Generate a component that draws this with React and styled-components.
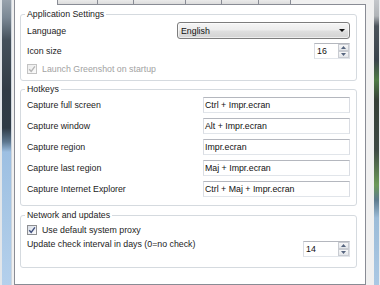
import React from "react";
import styled, { createGlobalStyle } from "styled-components";

const Global = createGlobalStyle`
  html, body { margin: 0; padding: 0; background: #f0f0f0; }
  body {
    width: 380px;
    height: 285px;
    overflow: hidden;
    font-family: "Liberation Sans", Arial, sans-serif;
    -webkit-font-smoothing: antialiased;
  }
  * { box-sizing: border-box; }
`;

const Screen = styled.div`
  display: flex;
  width: 380px;
  height: 285px;
  overflow: hidden;
`;

const LeftGlass = styled.div`
  flex: none;
  width: 12px;
  border-left: 2px solid #e2e6ea;
  border-right: 1px solid #cfd6dd;
  background: linear-gradient(
    180deg,
    #98a2ad 0px,
    #7a8794 18px,
    #45515c 40px,
    #313c46 90px,
    #2f3b47 128px,
    #5d7790 142px,
    #9dbfe2 152px,
    #a9c8e6 220px,
    #b4d0ec 285px
  );
`;

const RightGlass = styled.div`
  flex: none;
  width: 6px;
  border-right: 1px solid #e8ebee;
  background: linear-gradient(
    180deg,
    #c4c7cb 0px,
    #b0b4b8 16px,
    #4c545c 26px,
    #3a444c 60px,
    #4f7b46 80px,
    #364038 100px,
    #3e4a44 150px,
    #6c9a58 185px,
    #5d7b8e 200px,
    #9cbcd8 218px,
    #aac8e4 285px
  );
`;

const Window = styled.div`
  flex: 1;
  min-width: 0;
  display: flex;
  flex-direction: column;
  background: #f0f0f0;
  padding: 0 8px 0 2px;
`;

const TabStrip = styled.div`
  flex: none;
  display: flex;
  height: 5px;
`;

const Tab = styled.div`
  flex: none;
  width: ${(p) => p.$w}px;
  border-left: 1px solid #898c95;
  border-right: ${(p) => (p.$last ? "1px solid #898c95" : "none")};
  border-bottom: ${(p) => (p.$selected ? "none" : "1px solid #898c95")};
  background: ${(p) =>
    p.$selected ? "#ffffff" : "linear-gradient(180deg, #eaeaea, #dcdcdc)"};
`;

const TabFill = styled.div`
  flex: 1;
  border-bottom: 1px solid #898c95;
`;

const TabPage = styled.div`
  flex: 1;
  display: flex;
  flex-direction: column;
  background: #ffffff;
  border: 1px solid #898c95;
  border-top: none;
  padding: 4px 8px 0 5px;
`;

const Group = styled.fieldset`
  margin: ${(p) => p.$mt}px 0 0 0;
  padding: ${(p) => p.$pt}px 6px ${(p) => p.$pb}px 6px;
  border: 1px solid #d5dadf;
  border-radius: 3px;
  min-inline-size: 0;
  box-shadow: inset 1px 1px 0 #ffffff;
`;

const Legend = styled.legend`
  padding: 0 2px;
  margin-left: -2px;
  font-size: 8.8px;
  line-height: 10px;
  color: #1c1c1c;
`;

const Rows = styled.div`
  display: flex;
  flex-direction: column;
  gap: ${(p) => p.$gap}px;
`;

const Row = styled.div`
  display: flex;
  align-items: ${(p) => p.$align || "center"};
  height: ${(p) => p.$h}px;
`;

const Label = styled.span`
  font-size: 8.8px;
  line-height: 10px;
  white-space: nowrap;
  color: ${(p) => (p.$disabled ? "#a2a2a2" : "#1c1c1c")};
`;

const Combo = styled.div`
  margin-left: auto;
  width: 173px;
  height: 17px;
  display: flex;
  align-items: center;
  justify-content: space-between;
  padding: 0 4px 0 3px;
  border: 1px solid #7d7d7d;
  border-radius: 3px;
  background: linear-gradient(
    180deg,
    #f5f5f5 0%,
    #ececec 48%,
    #dfdfdf 52%,
    #d3d3d3 100%
  );
  box-shadow: inset 0 0 0 1px rgba(255, 255, 255, 0.6);
  font-size: 8.8px;
  color: #111;
`;

const Field = styled.div`
  margin-left: auto;
  width: 147px;
  height: 16px;
  display: flex;
  align-items: center;
  padding-left: 1px;
  border: 1px solid;
  border-color: #b4b7be #dadde3 #e1e5ea #dadde3;
  background: #ffffff;
  font-size: 8.8px;
  color: #111;
  white-space: nowrap;
`;

const Spin = styled.div`
  margin-left: auto;
  margin-top: ${(p) => p.$mt || 0}px;
  width: ${(p) => p.$w}px;
  height: 16px;
  display: flex;
  border: 1px solid;
  border-color: #b4b7be #dadde3 #e1e5ea #dadde3;
  background: #ffffff;
`;

const SpinValue = styled.span`
  flex: 1;
  display: flex;
  align-items: center;
  padding-left: 2px;
  font-size: 8.8px;
  color: #111;
`;

const SpinButtons = styled.div`
  flex: none;
  width: 11px;
  display: flex;
  flex-direction: column;
`;

const SpinBtn = styled.div`
  flex: 1;
  display: flex;
  align-items: center;
  justify-content: center;
  border: 1px solid #c9ccd2;
  background: linear-gradient(180deg, #f7f7f8, #e3e6ea);
`;

const CheckBox = styled.span`
  flex: none;
  width: 10px;
  height: 10px;
  margin-right: 5px;
  display: flex;
  align-items: center;
  justify-content: center;
  border: 1px solid ${(p) => (p.$disabled ? "#c3c3c3" : "#8e8f92")};
  background: ${(p) =>
    p.$disabled
      ? "linear-gradient(135deg, #ececec, #fbfbfb)"
      : "linear-gradient(135deg, #d8dde6, #fdfdfe)"};
`;

const Arrow = ({ up }) => (
  <svg width="5" height="3" viewBox="0 0 5 3">
    <path d={up ? "M0 3 L2.5 0 L5 3 Z" : "M0 0 L5 0 L2.5 3 Z"} fill="#56657f" />
  </svg>
);

const Check = ({ disabled }) => (
  <CheckBox $disabled={disabled}>
    <svg width="8" height="8" viewBox="0 0 8 8">
      <path
        d="M1.2 4.2 L3.2 6.3 L6.9 1.3"
        fill="none"
        stroke={disabled ? "#b5b5b5" : "#3f4f7e"}
        strokeWidth="1.4"
      />
    </svg>
  </CheckBox>
);

const Spinner = ({ value, w, mt }) => (
  <Spin $w={w} $mt={mt}>
    <SpinValue>{value}</SpinValue>
    <SpinButtons>
      <SpinBtn>
        <Arrow up />
      </SpinBtn>
      <SpinBtn>
        <Arrow />
      </SpinBtn>
    </SpinButtons>
  </Spin>
);

const hotkeys = [
  ["Capture full screen", "Ctrl + Impr.ecran"],
  ["Capture window", "Alt + Impr.ecran"],
  ["Capture region", "Impr.ecran"],
  ["Capture last region", "Maj + Impr.ecran"],
  ["Capture Internet Explorer", "Ctrl + Maj + Impr.ecran"],
];

const tabs = [40, 36, 52, 36, 37, 33];

export default function App() {
  return (
    <>
      <Global />
      <Screen>
        <LeftGlass />
        <Window>
          <TabStrip>
            <Tab $w={43} $selected />
            {tabs.map((w, i) => (
              <Tab key={i} $w={w} $last={i === tabs.length - 1} />
            ))}
            <TabFill />
          </TabStrip>
          <TabPage>
            <Group $mt={0} $pt={3} $pb={6}>
              <Legend>Application Settings</Legend>
              <Rows $gap={4}>
                <Row $h={17}>
                  <Label>Language</Label>
                  <Combo>
                    <span>English</span>
                    <svg width="6" height="3" viewBox="0 0 6 3">
                      <path d="M0 0 L6 0 L3 3 Z" fill="#111" />
                    </svg>
                  </Combo>
                </Row>
                <Row $h={16}>
                  <Label>Icon size</Label>
                  <Spinner value="16" w={36} />
                </Row>
                <Row $h={11}>
                  <Check disabled />
                  <Label $disabled>Launch Greenshot on startup</Label>
                </Row>
              </Rows>
            </Group>

            <Group $mt={3} $pt={3} $pb={8}>
              <Legend>Hotkeys</Legend>
              <Rows $gap={5}>
                {hotkeys.map(([label, key]) => (
                  <Row key={label} $h={16}>
                    <Label>{label}</Label>
                    <Field>{key}</Field>
                  </Row>
                ))}
              </Rows>
            </Group>

            <Group $mt={4} $pt={4} $pb={10}>
              <Legend>Network and updates</Legend>
              <Rows $gap={4}>
                <Row $h={11}>
                  <Check />
                  <Label>Use default system proxy</Label>
                </Row>
                <Row $h={18} $align="flex-start">
                  <Label>Update check interval in days (0=no check)</Label>
                  <Spinner value="14" w={47} mt={2} />
                </Row>
              </Rows>
            </Group>
          </TabPage>
        </Window>
        <RightGlass />
      </Screen>
    </>
  );
}
